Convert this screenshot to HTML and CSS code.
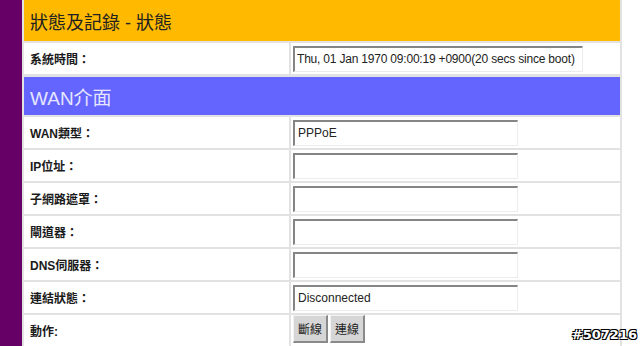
FILE: index.html
```html
<!DOCTYPE html>
<html lang="zh-Hant">
<head>
    <meta charset="UTF-8">
    <title>狀態及記錄 - 狀態</title>
    <link rel="stylesheet" href="styles.css">
</head>
<body>

    <!-- Barre latérale -->
    <div class="sidebar"></div>

    <div class="panel">
        <div class="title-bar">狀態及記錄 - 狀態</div>

        <div class="row row-time">
            <div class="label">系統時間：</div>
            <div class="value"><div class="field field-wide">Thu, 01 Jan 1970 09:00:19 +0900(20 secs since boot)</div></div>
        </div>

        <div class="section-bar">WAN介面</div>

        <div class="row">
            <div class="label">WAN類型：</div>
            <div class="value"><div class="field">PPPoE</div></div>
        </div>
        <div class="row">
            <div class="label">IP位址：</div>
            <div class="value"><div class="field"></div></div>
        </div>
        <div class="row">
            <div class="label">子網路遮罩：</div>
            <div class="value"><div class="field"></div></div>
        </div>
        <div class="row">
            <div class="label">閘道器：</div>
            <div class="value"><div class="field"></div></div>
        </div>
        <div class="row">
            <div class="label">DNS伺服器：</div>
            <div class="value"><div class="field"></div></div>
        </div>
        <div class="row">
            <div class="label">連結狀態：</div>
            <div class="value"><div class="field">Disconnected</div></div>
        </div>
        <div class="row">
            <div class="label">動作:</div>
            <div class="value buttons">
                <button class="btn">斷線</button>
                <button class="btn">連線</button>
            </div>
        </div>
    </div>

    <div class="watermark">#507216</div>

</body>
</html>
```

FILE: styles.css
```css
body {
    margin: 0;
    display: flex;
    align-items: flex-start;
    height: 346px;
    overflow: hidden;
    background: #ffffff;
    font-family: "Liberation Sans", "Noto Sans CJK TC", Arial, sans-serif;
    font-size: 12px;
    color: #1a1a1a;
}

.sidebar {
    width: 22px;
    height: 100%;
    background-color: #660066;
}

/* Tableau principal */
.panel {
    width: 596px;
    display: flex;
    flex-direction: column;
    gap: 2px;
    padding: 0 2px 2px;
    background-color: #e2e2e2;
}

.title-bar {
    height: 41px;
    display: flex;
    align-items: center;
    padding-left: 6px;
    background-color: #ffba00;
    color: #222222;
    font-size: 18px;
}

.section-bar {
    height: 38px;
    margin-top: 1px;
    display: flex;
    align-items: center;
    padding-left: 6px;
    background-color: #6464ff;
    color: #e6e6ff;
    font-size: 19px;
}

.row {
    display: grid;
    grid-template-columns: 265px 1fr;
    gap: 2px;
    height: 31px;
}

.label,
.value {
    background-color: #ffffff;
    display: flex;
    align-items: center;
}

.label {
    padding-left: 6px;
    font-weight: bold;
}

.value {
    padding-left: 2px;
}

/* Champs en creux */
.field {
    box-sizing: border-box;
    width: 225px;
    height: 26px;
    display: flex;
    align-items: center;
    padding-left: 3px;
    white-space: nowrap;
    border-style: solid;
    border-width: 2px 1px 1px 2px;
    border-color: #858585 #ececec #ececec #858585;
    background: #ffffff;
    color: #222222;
}

.field-wide {
    width: 290px;
    padding-left: 2px;
    letter-spacing: -0.2px;
}

.buttons {
    gap: 2px;
    align-items: flex-start;
}

.btn {
    height: 28px;
    padding: 0 4px;
    margin: 0;
    font-family: inherit;
    font-size: 12px;
    color: #222222;
    background-color: #d6d6d6;
    border-style: solid;
    border-width: 1px 2px 2px 1px;
    border-color: #f2f2f2 #8a8a8a #8a8a8a #f2f2f2;
}

.watermark {
    position: absolute;
    right: 3px;
    bottom: 4px;
    font-family: "DejaVu Sans", sans-serif;
    font-weight: bold;
    font-size: 13px;
    color: #ffffff;
    text-shadow: -1px -1px 0 #000, 1px -1px 0 #000, -1px 1px 0 #000, 1px 1px 0 #000;
}
```
